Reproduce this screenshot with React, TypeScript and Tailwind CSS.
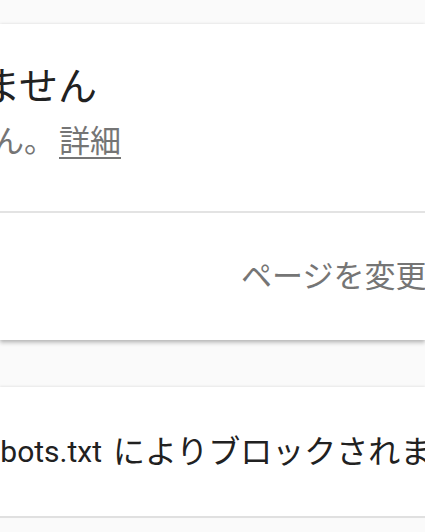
import React from "react";

const font = { fontFamily: "Roboto, 'Noto Sans CJK JP', sans-serif" };

export default function App() {
  return (
    <div
      className="w-[425px] h-[532px] overflow-hidden bg-[#fafafa] pt-[24px]"
      style={font}
    >
      {/* Result card */}
      <div className="bg-white shadow-[0_0_3px_rgba(0,0,0,0.12),0_3px_4px_rgba(0,0,0,0.22)]">
        <div className="pt-[41px] pb-[51px] border-b-2 border-[#e3e3e3]">
          <div className="flex w-[97px] justify-end whitespace-nowrap text-[39px] leading-[44px] text-[#212121]">
            ページを読み込めません
          </div>
          <div className="mt-[15px] flex w-[121px] justify-end whitespace-nowrap text-[31px] leading-[36px] text-[#757575]">
            <span>robots.txt によりアクセスできません。</span>
            <a className="ml-[4px] underline underline-offset-[5px] decoration-[2px]">詳細</a>
          </div>
        </div>
        <div className="h-[127px] flex items-center pl-[241px] whitespace-nowrap text-[31px] leading-[36px] text-[#757575]">
          ページを変更して再テスト
        </div>
      </div>

      {/* Page loading issues */}
      <div className="mt-[47px] bg-white shadow-[0_-1px_2px_rgba(0,0,0,0.08)] border-b-2 border-[#e0e0e0]">
        <div className="h-[129px] flex items-center whitespace-nowrap leading-[40px] text-[#212121]">
          <span className="flex w-[102px] justify-end text-[30px]">robots.txt</span>
          <span className="ml-[11px] text-[32px]">によりブロックされました</span>
        </div>
      </div>
    </div>
  );
}
